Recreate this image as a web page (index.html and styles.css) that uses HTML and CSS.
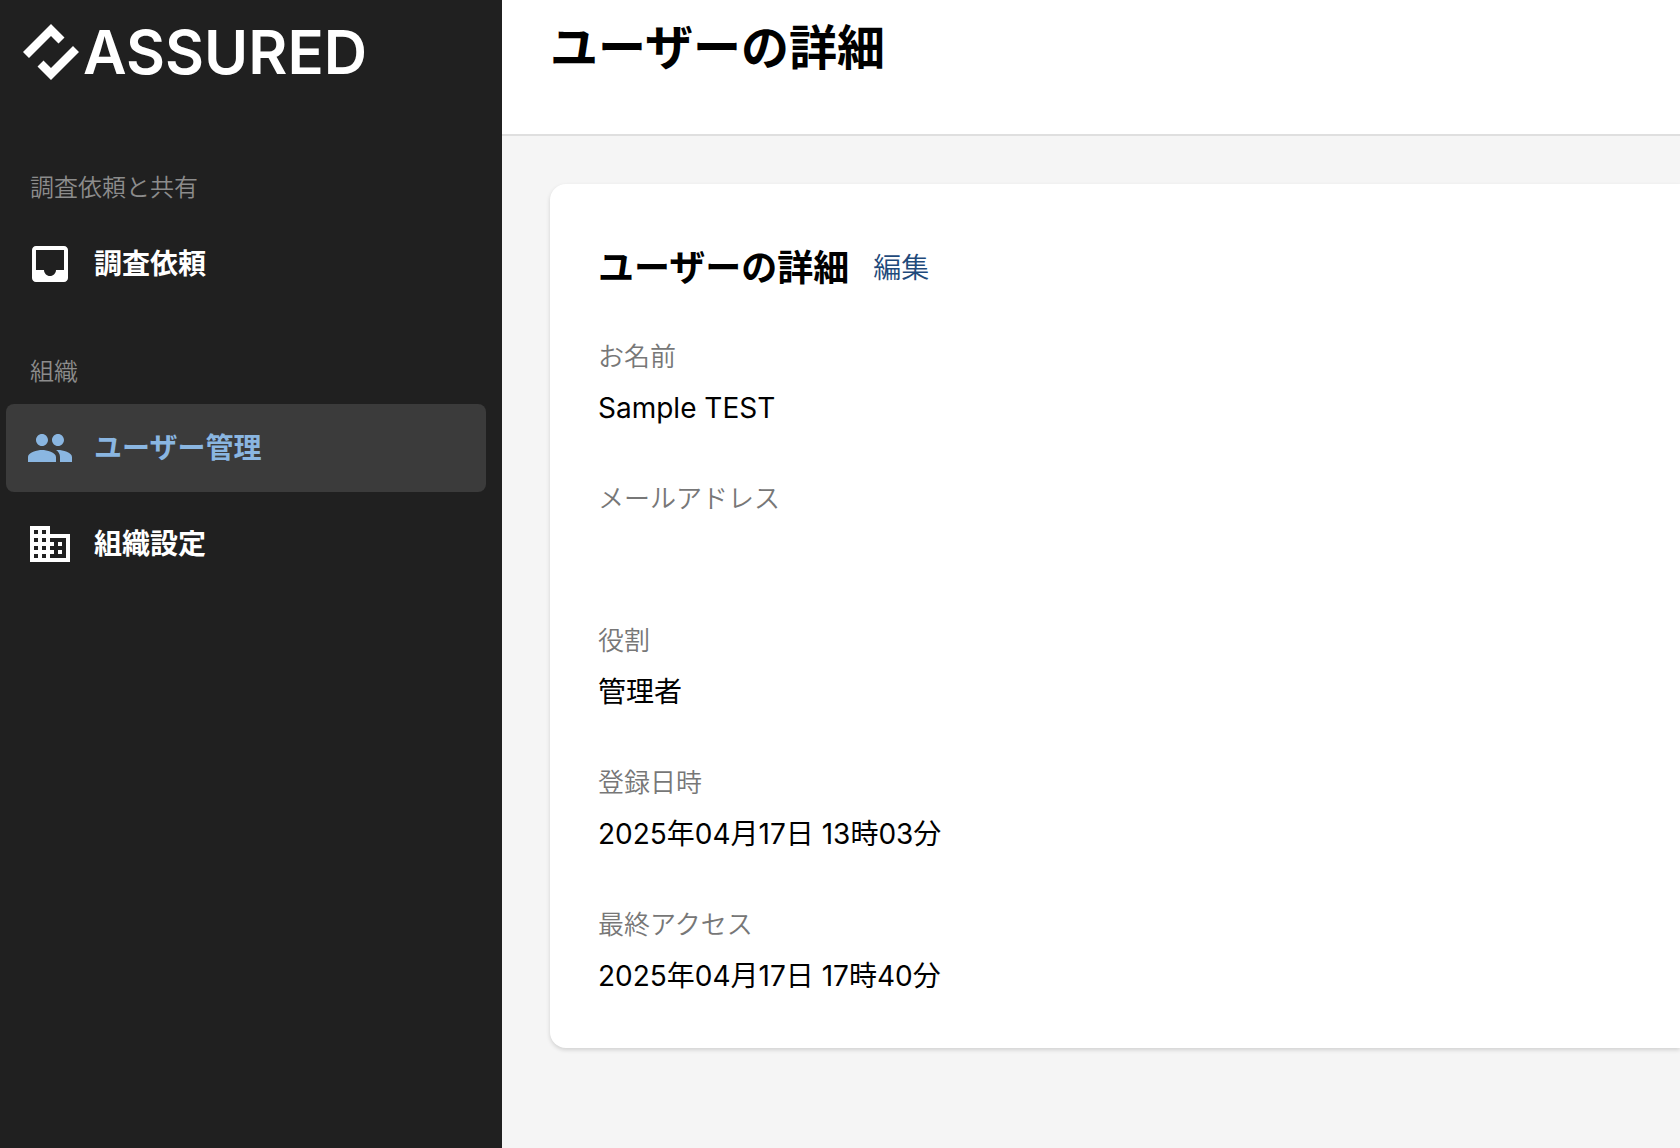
FILE: index.html
```
<!DOCTYPE html>
<html lang="ja">
<head>
    <meta charset="UTF-8">
    <meta name="viewport" content="width=device-width, initial-scale=1.0">
    <title>ユーザーの詳細</title>
    <link rel="stylesheet" href="styles.css">
</head>
<body>
    <aside class="sidebar">
        <a class="logo" href="#">
            <svg class="logo-mark" viewBox="0 0 56 56" aria-hidden="true">
                <path d="M0 28L28 0l13.5 13.5-6 6L28 12 6 34z"/>
                <path d="M28 56l28-28-6-6-22 22-7.500-7.500-6 6z"/>
            </svg>
            <span>ASSURED</span>
        </a>
        <nav>
            <section class="nav-group">
                <h2 class="nav-title">調査依頼と共有</h2>
                <a class="nav-item" href="#">
                    <svg class="icon" viewBox="0 0 24 24" aria-hidden="true"><path d="M19 3H4.990C3.880 3 3.010 3.890 3.010 5L3 19c0 1.100.880 2 1.990 2H19c1.100 0 2-.9 2-2V5c0-1.110-.9-2-2-2zm0 12h-4c0 1.660-1.350 3-3 3s-3-1.340-3-3H4.990V5H19v10z"/></svg>
                    調査依頼
                </a>
            </section>
            <section class="nav-group">
                <h2 class="nav-title">組織</h2>
                <a class="nav-item active" href="#" aria-current="page">
                    <svg class="icon" viewBox="0 0 24 24" aria-hidden="true"><path d="M16 11c1.660 0 2.990-1.340 2.990-3S17.660 5 16 5s-3 1.340-3 3 1.340 3 3 3zm-8 0c1.660 0 2.990-1.340 2.990-3S9.660 5 8 5 5 6.340 5 8s1.340 3 3 3zm0 2c-2.330 0-7 1.170-7 3.500V19h14v-2.500c0-2.330-4.670-3.500-7-3.500zm8 0c-.29 0-.62.020-.97.050 1.160.840 1.970 1.970 1.970 3.450V19h6v-2.500c0-2.330-4.670-3.500-7-3.500z"/></svg>
                    ユーザー管理
                </a>
                <a class="nav-item" href="#">
                    <svg class="icon" viewBox="0 0 24 24" aria-hidden="true"><path d="M12 7V3H2v18h20V7H12zM6 19H4v-2h2v2zm0-4H4v-2h2v2zm0-4H4V9h2v2zm0-4H4V5h2v2zm4 12H8v-2h2v2zm0-4H8v-2h2v2zm0-4H8V9h2v2zm0-4H8V5h2v2zm10 12h-8v-2h2v-2h-2v-2h2v-2h-2V9h8v10zm-2-8h-2v2h2v-2zm0 4h-2v2h2v-2z"/></svg>
                    組織設定
                </a>
            </section>
        </nav>
    </aside>

    <main class="main">
        <header class="page-header">
            <h1>ユーザーの詳細</h1>
        </header>
        <section class="card">
            <div class="card-header">
                <h2>ユーザーの詳細</h2>
                <a href="#">編集</a>
            </div>
            <dl class="details">
                <div class="field">
                    <dt>お名前</dt>
                    <dd>Sample TEST</dd>
                </div>
                <div class="field">
                    <dt>メールアドレス</dt>
                    <dd></dd>
                </div>
                <div class="field">
                    <dt>役割</dt>
                    <dd>管理者</dd>
                </div>
                <div class="field">
                    <dt>登録日時</dt>
                    <dd>2025年04月17日 13時03分</dd>
                </div>
                <div class="field">
                    <dt>最終アクセス</dt>
                    <dd>2025年04月17日 17時40分</dd>
                </div>
            </dl>
        </section>
    </main>
</body>
</html>
```

FILE: styles.css
```
* {
    box-sizing: border-box;
}
body {
    display: flex;
    min-height: 100vh;
    margin: 0;
    background-color: #f5f5f5;
    color: #000;
    font-family: Inter, "Noto Sans CJK JP", sans-serif;
    font-size: 28px;
    line-height: 48px;
}
h1, h2, dl, dd {
    margin: 0;
}
a {
    text-decoration: none;
}

/* Sidebar */
.sidebar {
    flex: 0 0 502px;
    padding: 20px 16px 20px 6px;
    background-color: #202020;
}
.logo {
    display: flex;
    align-items: center;
    gap: 4px;
    height: 64px;
    margin-bottom: 88px;
    padding-left: 17px;
    color: #fff;
    font-size: 60px;
    font-weight: 600;
}
.logo-mark {
    width: 56px;
    height: 56px;
    fill: currentColor;
}
.nav-group {
    display: flex;
    flex-direction: column;
    gap: 8px;
    margin-bottom: 48px;
}
.nav-title {
    margin-bottom: 8px;
    padding-left: 24px;
    color: #8c8c8c;
    font-size: 24px;
    font-weight: 350;
    line-height: 32px;
}
.nav-item {
    display: flex;
    align-items: center;
    gap: 20px;
    height: 88px;
    padding: 0 20px;
    border-radius: 8px;
    color: #fff;
    font-weight: 700;
}
.nav-item.active {
    background-color: #3b3b3b;
    color: #8ab6e1;
}
.icon {
    width: 48px;
    height: 48px;
    fill: currentColor;
}

/* Page */
.main {
    flex: 1;
    min-width: 0;
}
.page-header {
    padding: 12px 48px 50px;
    border-bottom: 2px solid #dfdfdf;
    background-color: #fff;
}
.page-header h1 {
    font-size: 48px;
    line-height: 72px;
}
.card {
    margin: 48px 0 48px 48px;
    padding: 48px 48px 44px;
    border-radius: 16px 0 0 16px;
    background-color: #fff;
    box-shadow: 0 2px 4px rgba(0, 0, 0, 0.15);
}
.card-header {
    display: flex;
    align-items: center;
    gap: 24px;
    margin-bottom: 30px;
}
.card-header h2 {
    font-size: 36px;
    line-height: 72px;
}
.card-header a {
    color: #1f4a7b;
    font-weight: 350;
}
.details {
    display: flex;
    flex-direction: column;
    gap: 40px;
}
.field dt {
    color: #777;
    font-size: 26px;
    font-weight: 350;
    line-height: 46px;
}
.field dd {
    min-height: 56px;
    line-height: 56px;
}
```
